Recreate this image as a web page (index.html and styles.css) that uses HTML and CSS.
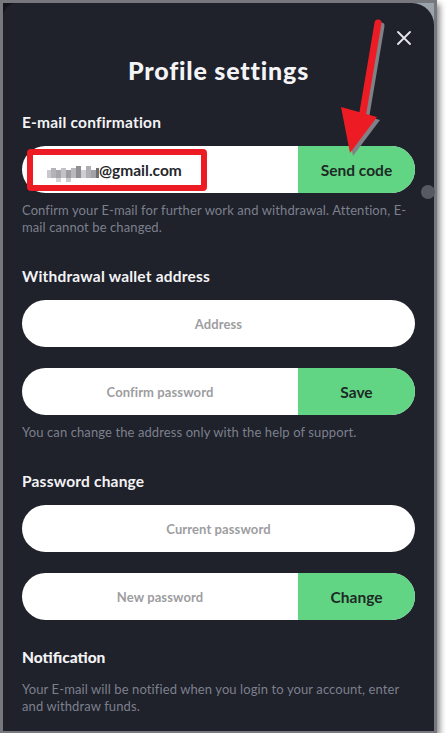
FILE: index.html
```html
<!DOCTYPE html>
<html lang="en">
<head>
<meta charset="utf-8">
<title>Profile settings</title>
<link rel="stylesheet" href="styles.css">
</head>
<body>
<div class="shot">
  <div class="modal">
    <button class="close" aria-label="Close">
      <svg width="14" height="14" viewBox="0 0 14 14"><path d="M1 1L13 13M13 1L1 13" stroke="#e6e7eb" stroke-width="1.8" stroke-linecap="round"/></svg>
    </button>
    <h1 class="title">Profile settings</h1>

    <section class="section">
      <h2 class="label">E-mail confirmation</h2>
      <div class="field split">
        <div class="input value">
          <svg class="mosaic" width="52" height="16" viewBox="0 0 52 16">
            <rect x="0" y="4" width="4" height="8" fill="#c9c9cc"/>
            <rect x="4" y="2" width="5" height="10" fill="#b4b4b8"/>
            <rect x="9" y="4" width="5" height="12" fill="#a7a7ab"/>
            <rect x="14" y="2" width="5" height="10" fill="#c3c3c6"/>
            <rect x="19" y="4" width="5" height="12" fill="#9d9da2"/>
            <rect x="24" y="2" width="5" height="10" fill="#b9b9bd"/>
            <rect x="29" y="0" width="5" height="12" fill="#8f8f94"/>
            <rect x="34" y="4" width="5" height="8" fill="#cfcfd2"/>
            <rect x="39" y="0" width="5" height="12" fill="#b0b0b4"/>
            <rect x="44" y="4" width="5" height="8" fill="#a2a2a6"/>
            <rect x="49" y="2" width="3" height="10" fill="#6e6e72"/>
            <rect x="9" y="12" width="5" height="4" fill="#d4d4d7"/>
            <rect x="19" y="12" width="5" height="4" fill="#cbcbce"/>
          </svg>@gmail.com
        </div>
        <button class="btn">Send code</button>
      </div>
      <p class="help">Confirm your E-mail for further work and withdrawal. Attention, E-mail cannot be changed.</p>
    </section>

    <section class="section">
      <h2 class="label">Withdrawal wallet address</h2>
      <div class="field"><div class="input placeholder">Address</div></div>
      <div class="field split gap">
        <div class="input placeholder">Confirm password</div>
        <button class="btn">Save</button>
      </div>
      <p class="help">You can change the address only with the help of support.</p>
    </section>

    <section class="section">
      <h2 class="label">Password change</h2>
      <div class="field"><div class="input placeholder">Current password</div></div>
      <div class="field split gap">
        <div class="input placeholder">New password</div>
        <button class="btn">Change</button>
      </div>
    </section>

    <section class="section notif">
      <h2 class="label big">Notification</h2>
      <p class="help">Your E-mail will be notified when you login to your account, enter and withdraw funds.</p>
    </section>

    <span class="scroll-dot"></span>
  </div>

  <div class="annot-box"></div>
  <svg class="annot-arrow" width="446" height="170" viewBox="0 0 446 170">
    <g transform="translate(3 3)" fill="#808187" stroke="#808187">
      <line x1="378" y1="23" x2="363" y2="112" stroke-width="7" stroke-linecap="round"/>
      <polygon points="341,107 377,117 350,153" stroke="none"/>
    </g>
    <g fill="#ed1c24" stroke="#ed1c24">
      <line x1="378" y1="23" x2="363" y2="112" stroke-width="7" stroke-linecap="round"/>
      <polygon points="341,107 377,117 350,153" stroke="none"/>
    </g>
  </svg>
</div>
</body>
</html>
```

FILE: styles.css
```css
html, body {
  margin: 0;
  padding: 0;
  background: #ffffff;
}

.shot {
  position: relative;
  width: 437px;
  height: 733px;
  box-sizing: border-box;
  border: 3px solid #76787d;
  border-bottom-width: 2px;
  background: linear-gradient(90deg, #14151b 50%, #9aa2ab 50%);
  box-shadow: 3px 4px 6px rgba(0, 0, 0, 0.45);
}

.modal {
  position: relative;
  height: 100%;
  box-sizing: border-box;
  background: #1f212b;
  border-radius: 14px 22px 0 0;
  padding: 52px 19px 0 19px;
  display: flex;
  flex-direction: column;
  font-family: Lato, "Open Sans", sans-serif;
  color: #f3f3f5;
}

.close {
  position: absolute;
  top: 28px;
  right: 23px;
  width: 14px;
  height: 14px;
  padding: 0;
  border: 0;
  background: none;
  display: flex;
}

.title {
  margin: 0;
  font-size: 25px;
  line-height: 30px;
  font-weight: 900;
  letter-spacing: 0.8px;
  text-align: center;
  color: #f4f4f6;
}

.section {
  display: flex;
  flex-direction: column;
  margin-top: 31px;
}

.section:first-of-type {
  margin-top: 28px;
}

.label {
  margin: 0;
  font-size: 15.5px;
  line-height: 18px;
  font-weight: 700;
  letter-spacing: 0.2px;
  color: #f3f3f5;
}

.label.big {
  font-size: 15.5px;
  line-height: 20px;
  font-weight: 900;
  letter-spacing: 0;
}

.field {
  display: flex;
  height: 47px;
  margin-top: 15px;
  border-radius: 24px;
  background: #ffffff;
  overflow: hidden;
}

.field.gap {
  margin-top: 21px;
}

.input {
  flex: 1;
  display: flex;
  align-items: center;
  justify-content: center;
  font-size: 13px;
  letter-spacing: 0.1px;
}

.placeholder {
  color: #9d9d9f;
  font-weight: 700;
}

.value {
  justify-content: flex-start;
  padding-left: 25px;
  font-size: 15.5px;
  font-weight: 700;
  letter-spacing: 0;
  color: #26272b;
}

.mosaic {
  display: block;
  margin-top: 8px;
  flex: none;
}

.btn {
  width: 117px;
  flex: none;
  border: 0;
  padding: 0;
  background: #62d584;
  color: #1d2a25;
  font-family: Lato, "Open Sans", sans-serif;
  font-size: 15.5px;
  font-weight: 700;
}

.help {
  margin: 9px 0 0;
  font-size: 13px;
  line-height: 17px;
  letter-spacing: 0.1px;
  color: #7c808b;
}

.notif {
  margin-top: 27px;
}

.notif .help {
  margin-top: 14px;
}

.scroll-dot {
  position: absolute;
  left: 418px;
  top: 182px;
  width: 14px;
  height: 14px;
  border-radius: 50%;
  background: #575a63;
}

.annot-box {
  position: absolute;
  left: 24px;
  top: 146px;
  width: 180px;
  height: 42px;
  box-sizing: border-box;
  border: 6px solid #ed1c24;
  border-radius: 4px;
}

.annot-arrow {
  position: absolute;
  left: -3px;
  top: -3px;
}
```
